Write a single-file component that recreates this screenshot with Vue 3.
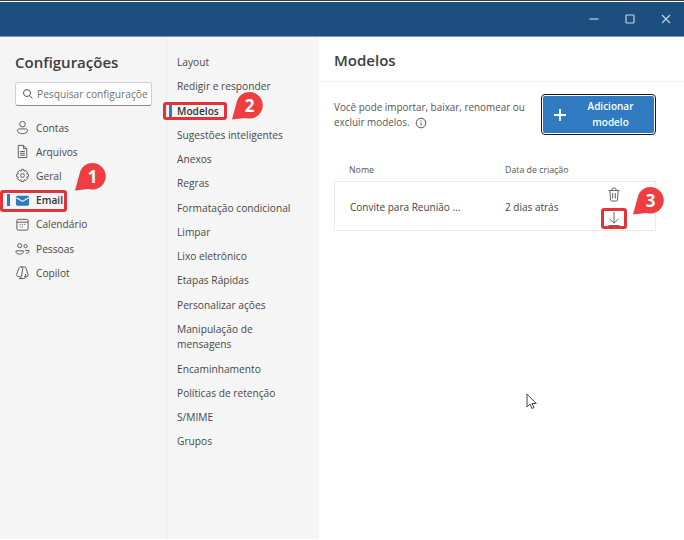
<script setup>
const accounts = [
  { label: 'Contas', icon: 'user' },
  { label: 'Arquivos', icon: 'file' },
  { label: 'Geral', icon: 'gear' },
  { label: 'Email', icon: 'mail', active: true },
  { label: 'Calendário', icon: 'cal' },
  { label: 'Pessoas', icon: 'people' },
  { label: 'Copilot', icon: 'copilot' }
]
const subs = ['Layout', 'Redigir e responder', 'Modelos', 'Sugestões inteligentes', 'Anexos', 'Regras', 'Formatação condicional', 'Limpar', 'Lixo eletrônico', 'Etapas Rápidas', 'Personalizar ações', 'Manipulação de mensagens', 'Encaminhamento', 'Políticas de retenção', 'S/MIME', 'Grupos']
const badges = [
  { n: '1', cls: 'b1' },
  { n: '2', cls: 'b2' },
  { n: '3', cls: 'b3' }
]
</script>

<template>
  <div class="window">
    <header class="titlebar">
      <svg class="ctl" width="12" height="12" viewBox="0 0 12 12"><path d="M1.500 6h9" /></svg>
      <svg class="ctl" width="12" height="12" viewBox="0 0 12 12"><rect x="2" y="2" width="8" height="8" rx="1" /></svg>
      <svg class="ctl" width="12" height="12" viewBox="0 0 12 12"><path d="M2 2l8 8M10 2l-8 8" /></svg>
    </header>
    <main class="body">
      <aside class="col-one">
        <h1>Configurações</h1>
        <div class="search">
          <svg width="12" height="12" viewBox="0 0 12 12" class="ico"><circle cx="5" cy="5" r="3.500" /><path d="M7.600 7.600L10.500 10.500" /></svg>
          <span class="search-text">Pesquisar configuraçõe</span>
        </div>
        <nav class="nav">
          <div v-for="a in accounts" :key="a.label" class="nav-item" :class="{ active: a.active }">
            <svg width="15" height="15" viewBox="0 0 16 16" class="ico">
              <template v-if="a.icon === 'user'"><circle cx="8" cy="4.500" r="3" /><path d="M2.500 11c0-1 1-1.500 2-1.500h7c1 0 2 .5 2 1.500 0 2.500-2.500 3.500-5.500 3.500S2.500 13.500 2.500 11z" /></template>
              <template v-else-if="a.icon === 'file'"><path d="M3.500 1.500h5.500l3.500 3.500v9.500h-9zM9 1.500V5h3.500M5.500 8h5M5.500 10h5M5.500 12h5" /></template>
              <template v-else-if="a.icon === 'gear'"><circle cx="8" cy="8" r="2" /><path d="M6.700 1.500h2.600l.4 2 1.800-.9 1.800 1.900-1 1.700 2 .5v2.600l-2 .5 1 1.700-1.800 1.900-1.800-.9-.4 2H6.700l-.4-2-1.800.9-1.800-1.900 1-1.700-2-.5V6.700l2-.5-1-1.700 1.800-1.900 1.800.9z" /></template>
              <template v-else-if="a.icon === 'mail'"><rect class="mail-fill" x="1" y="3" width="14" height="10.500" rx="1.500" /><path class="mail-line" d="M1.500 5L8 9l6.500-4" /></template>
              <template v-else-if="a.icon === 'cal'"><rect x="2" y="2.500" width="12" height="11.500" rx="1.500" /><path d="M2 5.500h12M5 8h1M7.500 8h1M10 8h1M5 10.500h1M7.500 10.500h1" /></template>
              <template v-else-if="a.icon === 'people'"><circle cx="5" cy="5" r="2.200" /><circle cx="11.300" cy="5.500" r="1.800" /><path d="M1 10.500h8c0 3-1.500 3.500-4 3.500s-4-.5-4-3.500zM10.500 10h4.500c0 2.500-1 3-3.500 3" /></template>
              <template v-else><path d="M6.500 2h3.500c1 0 1.500.5 1.800 1.500l2 6.500c.4 1.400-.5 2.500-1.800 2.500H9.500M6.500 2C5 2 4.300 2.800 3.800 4.200L1.800 10c-.4 1.400.4 2.500 1.800 2.500h2.400M6.500 2C8 2 8.500 3 8.200 4.500L6.700 12.500C6.400 13.700 5.800 14.500 4.500 14.500h5c1.300 0 2-.8 2.300-2L11 9.500" /></template>
            </svg>
            <span>{{ a.label }}</span>
          </div>
        </nav>
      </aside>
      <aside class="col-two">
        <div v-for="s in subs" :key="s" class="sub" :class="{ active: s === 'Modelos', wrap: s.startsWith('Manipula') }">{{ s }}</div>
      </aside>
      <section class="content">
        <h2>Modelos</h2>
        <div class="intro">
          <p>Você pode importar, baixar, renomear ou excluir modelos.
            <svg width="12" height="12" viewBox="0 0 12 12" class="info"><circle cx="6" cy="6" r="4.800" /><path d="M6 5.500v3M6 3.400v1" /></svg>
          </p>
          <button class="add">
            <svg width="14" height="14" viewBox="0 0 14 14"><path d="M7 1v12M1 7h12" /></svg>
            <span>Adicionar modelo</span>
          </button>
        </div>
        <div class="table-head">
          <span class="c-name head-name">Nome</span>
          <span>Data de criação</span>
        </div>
        <div class="row">
          <span class="c-name cell">Convite para Reunião ...</span>
          <span class="c-date cell">2 dias atrás</span>
          <div class="actions">
            <svg width="14" height="15" viewBox="0 0 14 15" class="ico dark"><path d="M1.500 3.500h11M5 3.500V2c0-.5.4-1 1-1h2c.6 0 1 .5 1 1v1.500M2.800 3.500l.8 9.500c0 .6.5 1 1 1h4.800c.5 0 1-.4 1-1l.8-9.500M5.700 6v5.500M8.300 6v5.500" /></svg>
            <svg width="14" height="15" viewBox="0 0 14 15" class="ico dark"><path d="M7 1v11M2.500 7.800L7 12.200l4.500-4.400M1.500 14.500h11" /></svg>
          </div>
        </div>
      </section>
    </main>

    <i class="mark mark-email"></i>
    <i class="mark mark-modelos"></i>
    <i class="mark mark-down"></i>
    <svg v-for="b in badges" :key="b.n" class="badge" :class="b.cls" width="32" height="28" viewBox="0 0 32 28">
      <path d="M18.500 0a13.300 13.300 0 1 1-4 26L1 27.500 6.200 8.500A13.300 13.300 0 0 1 18.500 0z" />
      <text x="18.500" y="19.500" text-anchor="middle">{{ b.n }}</text>
    </svg>
    <svg class="cursor" width="12" height="17" viewBox="0 0 12 17"><path d="M1 1v13l3-3 2 4.500 2-1-2-4h4.200z" /></svg>
  </div>
</template>

<style>
html, body { margin: 0; background: #fff; }
</style>

<style scoped>
.window {
  position: relative;
  width: 684px;
  height: 540px;
  overflow: hidden;
  font-family: "Open Sans", "Noto Sans", sans-serif;
  color: #484848;
  background: #fff;
  box-shadow: inset 0 1px 0 #3a3a3a;
}
.titlebar {
  height: 35px;
  margin-top: 1px;
  padding-right: 12px;
  position: relative;
  top: 1px;
  background: #1c4f80;
  display: flex;
  justify-content: flex-end;
  align-items: center;
  gap: 24px;
  border-bottom: 1px solid #7b98b4;
  box-sizing: border-box;
}
.ctl { fill: none; stroke: #c4d3e2; stroke-width: 1.200; }
.body { display: flex; height: 503px; }
.col-one {
  width: 166px;
  flex: none;
  background: #f5f5f5;
  border-right: 1px solid #ebebeb;
}
h1 { margin: 15px 0 0 15px; font-size: 15px; line-height: 22px; font-weight: 600; color: #3d3d3d; }
.search {
  margin: 9px 0 0 15px;
  width: 137px;
  height: 24px;
  box-sizing: border-box;
  border: 1px solid #d1d1d1;
  border-bottom-color: #8a8a8a;
  border-radius: 3px;
  background: #fff;
  display: flex;
  align-items: center;
  gap: 3px;
  padding-left: 6px;
  overflow: hidden;
}
.search-text { font-size: 10.200px; color: #707070; white-space: nowrap; }
.ico { fill: none; stroke: #555; stroke-width: 1; flex: none; }
.ico.dark { stroke: #666; }
.nav { margin-top: 9.500px; display: flex; flex-direction: column; }
.nav-item {
  height: 24.200px;
  display: flex;
  align-items: center;
  gap: 6px;
  padding-left: 15px;
  font-size: 10.200px;
  position: relative;
}
.nav-item.active { font-weight: 600; color: #333; }
.nav-item.active::before {
  content: "";
  position: absolute;
  left: 7px;
  top: 6px;
  width: 3px;
  height: 12px;
  background: #2f7ac0;
}
.mail-fill { fill: #2f7ac0; stroke: none; }
.mail-line { stroke: #fff; stroke-width: 1.100; }
.col-two {
  width: 152px;
  flex: none;
  background: #f5f5f5;
  padding-top: 14px;
  box-sizing: border-box;
}
.sub {
  height: 24.250px;
  line-height: 24.250px;
  padding-left: 10px;
  font-size: 10.200px;
  white-space: nowrap;
}
.sub.wrap {
  height: 39.800px;
  line-height: 15.500px;
  white-space: normal;
  padding-top: 5px;
  padding-right: 50px;
  box-sizing: border-box;
}
.sub.active { font-weight: 600; color: #333; position: relative; }
.sub.active::before {
  content: "";
  position: absolute;
  left: 2px;
  top: 6px;
  width: 3px;
  height: 12px;
  background: #2f7ac0;
}
.content { flex: 1; min-width: 0; }
h2 {
  margin: 0;
  height: 46px;
  box-sizing: border-box;
  padding: 13px 0 0 15px;
  font-size: 15px;
  line-height: 22px;
  font-weight: 600;
  color: #3d3d3d;
  border-bottom: 1px solid #f0f0f0;
}
.intro { display: flex; padding: 13px 0 0 15px; align-items: flex-start; }
.intro p {
  margin: 5px 0 0;
  width: 200px;
  flex: none;
  font-size: 9.900px;
  line-height: 15px;
  color: #555;
}
.info { fill: none; stroke: #555; stroke-width: 1; vertical-align: -2.500px; margin-left: 3px; }
.add {
  margin-left: 8px;
  width: 113px;
  height: 39px;
  box-sizing: border-box;
  background: #2f7ac0;
  border: 1px solid #fff;
  outline: 1.500px solid #1a1a1a;
  outline-offset: -0.500px;
  border-radius: 3px;
  padding: 0 10px;
  display: flex;
  align-items: center;
  gap: 10px;
  color: #fff;
  font-family: inherit;
  font-size: 10px;
  font-weight: 600;
  line-height: 15.500px;
}
.add svg { fill: none; stroke: #fff; stroke-width: 1.800; flex: none; }
.add span { flex: 1; text-align: center; }
.table-head {
  margin: 25px 0 0 15px;
  width: 322px;
  height: 22px;
  display: flex;
  align-items: center;
  font-size: 8.800px;
  color: #555;
}
.c-name { width: 170px; padding-left: 15px; flex: none; box-sizing: border-box; }
.head-name { width: 171px; }
.row {
  margin-left: 15px;
  width: 322px;
  height: 50px;
  box-sizing: border-box;
  border: 1px solid #eaeaea;
  display: flex;
  align-items: center;
  font-size: 10px;
  color: #444;
}
.cell { margin-top: 2px; }
.c-date { width: 102px; flex: none; }
.actions {
  display: flex;
  flex-direction: column;
  align-items: center;
  gap: 9px;
  width: 14px;
}
.mark {
  position: absolute;
  border: 3px solid #e0343a;
  border-radius: 3px;
  box-sizing: border-box;
}
.mark-email { left: 0; top: 190px; width: 67px; height: 22px; }
.mark-modelos { left: 163px; top: 102px; width: 64px; height: 18px; }
.mark-down { left: 601px; top: 208px; width: 26px; height: 21px; }
.badge { position: absolute; }
.badge path { fill: #ef3e42; }
.badge text {
  fill: #fff;
  font-family: "Open Sans", sans-serif;
  font-size: 17px;
  font-weight: 700;
}
.b1 { left: 74px; top: 163px; }
.b2 { left: 231px; top: 92px; }
.b3 { left: 632px; top: 187px; }
.cursor { position: absolute; left: 526px; top: 393px; fill: #fff; stroke: #444; stroke-width: 1; }
</style>
